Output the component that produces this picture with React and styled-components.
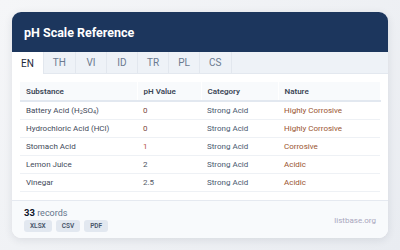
import React from 'react'
import styled, { createGlobalStyle } from 'styled-components'

const GlobalStyle = createGlobalStyle`
  html, body {
    margin: 0;
    padding: 0;
    background: linear-gradient(135deg, #f5f6f8 0%, #e9ecf1 100%);
    font-family: Roboto, "Liberation Sans", Arial, sans-serif;
    width: 400px;
    height: 250px;
    overflow: hidden;
  }
`

const Page = styled.div`
  padding: 12px;
`

const Card = styled.div`
  width: 376px;
  height: 226px;
  background: #ffffff;
  border-radius: 9px;
  overflow: hidden;
  box-shadow: 0 2px 8px rgba(30, 41, 59, 0.1);
  display: flex;
  flex-direction: column;
`

const Header = styled.div`
  height: 40px;
  background: #1c365d;
  color: #ffffff;
  display: flex;
  align-items: center;
  padding-left: 12px;
  font-size: 12.5px;
  font-weight: 700;
`

const Tabs = styled.div`
  display: flex;
  height: 21px;
  background: #eef2f7;
  border-bottom: 1px solid #e3e8ef;
`

const Tab = styled.div`
  display: flex;
  align-items: center;
  justify-content: center;
  padding: 0 9px;
  min-width: 12px;
  font-size: 10px;
  color: ${(p) => (p.active ? '#1e293b' : '#6b7a90')};
  background: ${(p) => (p.active ? '#ffffff' : 'transparent')};
  border-right: 1px solid #e2e7ee;
  margin-bottom: ${(p) => (p.active ? '-1px' : '0')};
`

const Body = styled.div`
  padding: 8px 8px 8px;
  border-bottom: 1px solid #e5e9f0;
`

const Table = styled.table`
  width: 360px;
  border-collapse: collapse;
  table-layout: fixed;
`

const Th = styled.th`
  height: 18px;
  padding: 0 6px;
  text-align: left;
  font-size: 8px;
  font-weight: 600;
  color: #3b4656;
  background: #f8fafc;
  border-bottom: 2px solid #e2e8f0;
  border-right: 1px solid #ffffff;
`

const Td = styled.td`
  height: 17px;
  padding: 0 6px;
  font-size: 8px;
  color: ${(p) => p.color || '#3f4a5a'};
  border-bottom: 1px solid #eef1f5;
  white-space: nowrap;
`

const Footer = styled.div`
  flex: 1;
  background: #f8fafc;
  display: flex;
  justify-content: space-between;
  align-items: flex-end;
  padding: 6px 12px 6px;
`

const Count = styled.div`
  font-size: 9px;
  color: #64748b;

  b {
    color: #0f172a;
    font-weight: 700;
    font-size: 9.5px;
  }
`

const Buttons = styled.div`
  display: flex;
  gap: 4px;
  margin-top: 2px;
`

const ExportButton = styled.span`
  display: inline-flex;
  align-items: center;
  height: 12px;
  padding: 0 6px;
  border-radius: 3px;
  background: #e2e8f0;
  color: #475569;
  font-size: 6.5px;
  font-weight: 600;
`

const Brand = styled.div`
  font-size: 8px;
  color: #a9a6bd;
  margin-bottom: 7px;
`

const Sub = styled.span`
  sub {
    font-size: 5.5px;
    vertical-align: -1px;
  }
`

const rows = [
  { name: <>Battery Acid (H<sub>2</sub>SO<sub>4</sub>)</>, ph: '0', phColor: '#7d4a3e', cat: 'Strong Acid', nature: 'Highly Corrosive' },
  { name: 'Hydrochloric Acid (HCl)', ph: '0', phColor: '#7d4a3e', cat: 'Strong Acid', nature: 'Highly Corrosive' },
  { name: 'Stomach Acid', ph: '1', phColor: '#b5533f', cat: 'Strong Acid', nature: 'Corrosive' },
  { name: 'Lemon Juice', ph: '2', phColor: '#4b5160', cat: 'Strong Acid', nature: 'Acidic' },
  { name: 'Vinegar', ph: '2.5', phColor: '#555b68', cat: 'Strong Acid', nature: 'Acidic' },
]

const tabs = ['EN', 'TH', 'VI', 'ID', 'TR', 'PL', 'CS']

export default function App() {
  return (
    <>
      <GlobalStyle />
      <Page>
        <Card>
          <Header>pH Scale Reference</Header>
          <Tabs>
            {tabs.map((t, i) => (
              <Tab key={t} active={i === 0}>{t}</Tab>
            ))}
          </Tabs>
          <Body>
            <Table>
              <colgroup>
                <col style={{ width: 117 }} />
                <col style={{ width: 64 }} />
                <col style={{ width: 77 }} />
                <col style={{ width: 102 }} />
              </colgroup>
              <thead>
                <tr>
                  <Th>Substance</Th>
                  <Th>pH Value</Th>
                  <Th>Category</Th>
                  <Th>Nature</Th>
                </tr>
              </thead>
              <tbody>
                {rows.map((r, i) => (
                  <tr key={i}>
                    <Td><Sub>{r.name}</Sub></Td>
                    <Td color={r.phColor}>{r.ph}</Td>
                    <Td color="#4a5a70">{r.cat}</Td>
                    <Td color="#9a5530">{r.nature}</Td>
                  </tr>
                ))}
              </tbody>
            </Table>
          </Body>
          <Footer>
            <div>
              <Count><b>33</b> records</Count>
              <Buttons>
                <ExportButton>XLSX</ExportButton>
                <ExportButton>CSV</ExportButton>
                <ExportButton>PDF</ExportButton>
              </Buttons>
            </div>
            <Brand>listbase.org</Brand>
          </Footer>
        </Card>
      </Page>
    </>
  )
}
